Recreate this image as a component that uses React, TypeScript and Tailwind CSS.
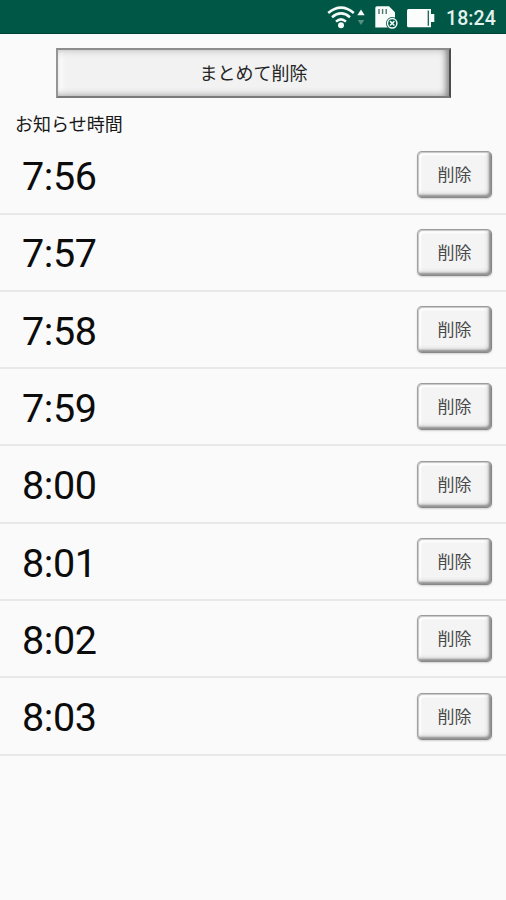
const times = ["7:56", "7:57", "7:58", "7:59", "8:00", "8:01", "8:02", "8:03"];

function StatusIcons() {
  return (
    <svg width="120" height="34" viewBox="326 0 120 34" className="block">
      <g fill="none" stroke="#f4fbf9" strokeWidth="2.5">
        <path d="M328.2 13Q341 2.2 353.8 13" />
        <path d="M332 17.2Q341 9.6 350 17.2" />
        <path d="M336 21.6Q341 17.2 346 21.6" />
      </g>
      <circle cx="341" cy="25.3" r="3" fill="#f4fbf9" />
      <path d="M357.3 15.3L361 9.5L364.7 15.3Z" fill="#f4fbf9" />
      <path d="M357.8 20L361 25L364.2 20Z" fill="#5c9082" />
      <path d="M377 6.3H389L395 12.3V27.5H375.3V8Q375.3 6.3 377 6.3Z" fill="#f8fcfb" />
      <path d="M379 9v5M382.6 9v5M386.2 9v5" stroke="#54776d" strokeWidth="1.4" />
      <circle cx="392.2" cy="23.3" r="6.2" fill="#005746" />
      <circle cx="392.2" cy="23.3" r="4.7" fill="#005746" stroke="#f4fbf9" strokeWidth="1.5" />
      <path d="M390 21.1l4.4 4.4M394.4 21.1l-4.4 4.4" stroke="#f4fbf9" strokeWidth="1.5" />
      <path d="M408.5 9H431V14H434.3V22H431V27.3H408.5Q407 27.3 407 25.8V10.5Q407 9 408.5 9Z" fill="#fafdfc" />
      <path d="M428.3 10.5V25.8" stroke="#17604f" strokeWidth="1.3" />
    </svg>
  );
}

export default function App() {
  return (
    <div className="flex h-[900px] w-[506px] flex-col overflow-hidden bg-[#fafafa] font-['Roboto','Noto_Sans_CJK_JP',sans-serif] text-[#0c0c0c]">
      <header className="flex h-[34px] shrink-0 items-center justify-end border-b border-[#004335] bg-[#005746] pr-[10px]">
        <StatusIcons />
        <span className="w-[50px] pt-[5px] text-[19.5px] leading-none font-medium tracking-[0.1px] whitespace-nowrap text-[#e4f2ee]">18:24</span>
      </header>
      <button className="mt-[14px] ml-[56px] flex h-[50px] w-[395px] shrink-0 items-center justify-center border-2 border-t-[#8c8c8c] border-r-[#4c4c4c] border-b-[#7a7a7a] border-l-[#959595] bg-[#f2f2f2] pt-[2px] text-[18px] leading-none text-[#252525] shadow-[inset_-7px_0_6px_-4px_#858585,inset_0_-5px_6px_-3px_#bdbdbd,inset_0_5px_7px_-3px_#d2d2d2,inset_7px_0_5px_-3px_#fff]">
        まとめて削除
      </button>
      <h1 className="flex h-[39.3px] shrink-0 items-center pt-[15px] pl-[15px] text-[18px] leading-none font-normal text-[#181818]">お知らせ時間</h1>
      <ul>
        {times.map((time) => (
          <li
            key={time}
            className="flex h-[77.3px] items-center justify-between border-b-2 border-[#e8e8e8] pr-[14px] pl-[22px]"
          >
            <span className="pt-[4px] text-[39.5px] leading-none tracking-[-0.4px]">{time}</span>
            <button className="flex h-[47px] w-[75px] items-center justify-center rounded-[5px] border border-t-[#9c9c9c] border-r-[#858585] border-b-[#888888] border-l-[#a4a4a4] bg-[#f4f4f4] pt-[2px] text-[17px] leading-none text-[#484848] shadow-[inset_-2px_-2px_2px_#929292,inset_-3px_-3px_4px_#d0d0d0,inset_1px_1px_1px_#c4c4c4,inset_3px_3px_2px_#fff,0_1px_2px_#d0d0d0]">
              削除
            </button>
          </li>
        ))}
      </ul>
    </div>
  );
}
